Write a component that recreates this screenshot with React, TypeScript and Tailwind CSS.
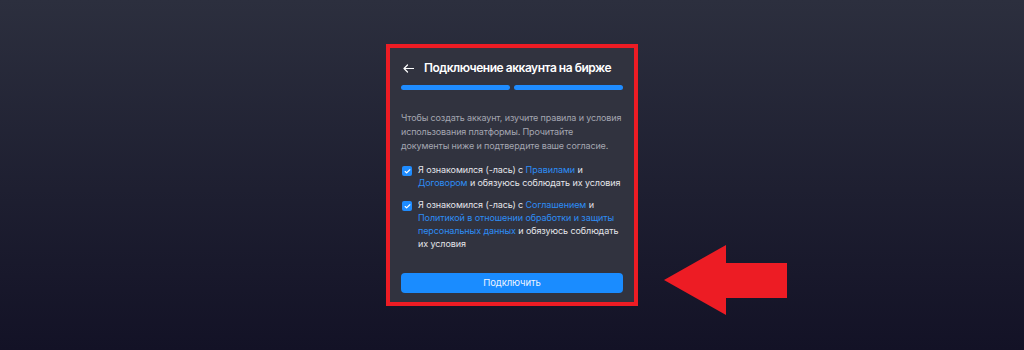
import React, { useState } from "react";
import { Check } from "lucide-react";

function CheckRow({
  checked,
  onToggle,
  children,
}: {
  checked: boolean;
  onToggle: () => void;
  children: React.ReactNode;
}) {
  return (
    <label className="flex items-start gap-[6px] cursor-pointer">
      <span
        onClick={onToggle}
        className={
          "mt-[3px] ml-[1px] flex h-[10px] w-[10px] shrink-0 items-center justify-center rounded-[2px] " +
          (checked ? "bg-[#1f8cff]" : "border border-gray-500")
        }
      >
        {checked && <Check className="h-[7px] w-[7px] text-white" strokeWidth={4} />}
      </span>
      <span className="text-[9px] leading-[13px] tracking-[-0.01em] text-[#e4e5ea]">
        {children}
      </span>
    </label>
  );
}

export default function App() {
  const [rules, setRules] = useState(true);
  const [policy, setPolicy] = useState(true);

  return (
    <div
      className="relative flex h-[350px] w-full items-center justify-center bg-gradient-to-b from-[#2c2f3e] to-[#131226]"
      style={{ fontFamily: "Inter, 'Noto Sans', sans-serif" }}
    >
      {/* card with red highlight frame */}
      <div className="w-[252px] border-4 border-[#ed1c24] bg-[#31333f] px-[11px] pt-[12px] pb-[9px]">
        <div className="flex h-[16px] items-center gap-[10px]">
          <svg className="ml-[2px]" width="11" height="9" viewBox="0 0 11 9" fill="none">
            <path
              d="M10.5 4.5H1M4.5 1L1 4.5L4.5 8"
              stroke="white"
              strokeWidth="1.2"
              strokeLinecap="round"
              strokeLinejoin="round"
            />
          </svg>
          <h2 className="text-[12px] font-semibold leading-[16px] tracking-[-0.04em] text-white">
            Подключение аккаунта на бирже
          </h2>
        </div>

        <div className="mt-[9px] flex gap-[4px]">
          <div className="h-[5px] flex-1 rounded-full bg-[#1f8cff]" />
          <div className="h-[5px] flex-1 rounded-full bg-[#1f8cff]" />
        </div>

        <p className="mt-[21px] text-[9px] leading-[14px] tracking-[-0.015em] text-[#a4a6b1]">
          Чтобы создать аккаунт, изучите правила и условия использования платформы. Прочитайте
          документы ниже и подтвердите ваше согласие.
        </p>

        <div className="mt-[10px] flex flex-col gap-[9px]">
          <CheckRow checked={rules} onToggle={() => setRules(!rules)}>
            Я ознакомился (-лась) с <span className="text-[#2d8df5]">Правилами</span> и{" "}
            <span className="text-[#2d8df5]">Договором</span> и обязуюсь соблюдать их условия
          </CheckRow>
          <CheckRow checked={policy} onToggle={() => setPolicy(!policy)}>
            Я ознакомился (-лась) с <span className="text-[#2d8df5]">Соглашением</span> и{" "}
            <span className="text-[#2d8df5]">
              Политикой в отношении обработки и защиты персональных данных
            </span>{" "}
            и обязуюсь соблюдать их условия
          </CheckRow>
        </div>

        <button className="mt-[23px] h-[20px] w-full rounded-[4px] bg-[#1a8cff] text-[9.5px] tracking-[-0.01em] text-[#eef4ff]">
          Подключить
        </button>
      </div>

      {/* red pointer arrow */}
      <svg
        className="absolute left-[660px] top-[240px]"
        width="130"
        height="80"
        viewBox="0 0 130 80"
      >
        <polygon points="4,40 66,5 66,23 127,23 127,58 66,58 66,75" fill="#ed1c24" />
      </svg>
    </div>
  );
}
